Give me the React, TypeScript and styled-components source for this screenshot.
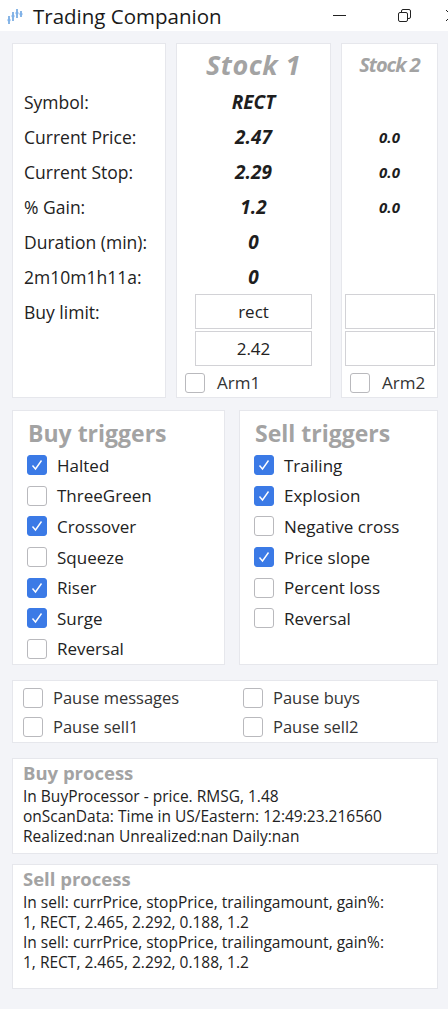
import styled, { createGlobalStyle } from 'styled-components'

const GlobalStyle = createGlobalStyle`
  body {
    margin: 0;
    background: #f3f4f8;
    font-family: "Open Sans", "Noto Sans", sans-serif;
    color: #222;
  }
`

const stockRows = [
  { label: 'Symbol:', s1: 'RECT', s2: '' },
  { label: 'Current Price:', s1: '2.47', s2: '0.0' },
  { label: 'Current Stop:', s1: '2.29', s2: '0.0' },
  { label: '% Gain:', s1: '1.2', s2: '0.0' },
  { label: 'Duration (min):', s1: '0', s2: '' },
  { label: '2m10m1h11a:', s1: '0', s2: '' },
]

const buyTriggers = [
  { name: 'Halted', on: true },
  { name: 'ThreeGreen', on: false },
  { name: 'Crossover', on: true },
  { name: 'Squeeze', on: false },
  { name: 'Riser', on: true },
  { name: 'Surge', on: true },
  { name: 'Reversal', on: false },
]

const sellTriggers = [
  { name: 'Trailing', on: true },
  { name: 'Explosion', on: true },
  { name: 'Negative cross', on: false },
  { name: 'Price slope', on: true },
  { name: 'Percent loss', on: false },
  { name: 'Reversal', on: false },
]

function Check({ on }: { on: boolean }) {
  return (
    <Box $on={on}>
      {on && (
        <svg width="14" height="14" viewBox="0 0 14 14">
          <path d="M2.5 7.5 L5.5 11 L11.5 2.5" fill="none" stroke="#fff" strokeWidth="1.4" />
        </svg>
      )}
    </Box>
  )
}

export default function App() {
  return (
    <Window>
      <GlobalStyle />
      <TitleBar>
        <AppIcon width="18" height="18" viewBox="0 0 18 18">
          <g stroke="#4a8fd8" strokeWidth="1.3" fill="none">
            <line x1="3" y1="9" x2="3" y2="17" />
            <line x1="7" y1="5" x2="7" y2="14" />
            <line x1="11" y1="2" x2="11" y2="11" />
            <line x1="15" y1="4" x2="15" y2="10" />
          </g>
          <g fill="#7fb2ea">
            <circle cx="3" cy="13" r="1.6" />
            <circle cx="7" cy="9" r="1.6" />
            <circle cx="11" cy="6" r="1.6" />
            <circle cx="15" cy="7" r="1.6" />
          </g>
        </AppIcon>
        <Title>Trading Companion</Title>
        <WinButton $gap={0}>
          <svg width="15" height="15" viewBox="0 0 15 15">
            <line x1="1" y1="7.5" x2="14" y2="7.5" stroke="#222" strokeWidth="1" />
          </svg>
        </WinButton>
        <WinButton $gap={50}>
          <svg width="15" height="15" viewBox="0 0 15 15">
            <rect x="1.5" y="4.5" width="9" height="9" rx="1.5" fill="none" stroke="#222" />
            <path d="M4.5 4.5 V3 a1.5 1.5 0 0 1 1.5 -1.5 H12 a1.5 1.5 0 0 1 1.5 1.5 V9 a1.5 1.5 0 0 1 -1.5 1.5 H10.5" fill="none" stroke="#222" />
          </svg>
        </WinButton>
        <WinButton $gap={32}>
          <svg width="15" height="15" viewBox="0 0 15 15">
            <line x1="2" y1="2" x2="13" y2="13" stroke="#222" />
            <line x1="13" y1="2" x2="2" y2="13" stroke="#222" />
          </svg>
        </WinButton>
      </TitleBar>

      <Content>
        <TopRow>
          <Card>
            <HeaderSpace />
            {stockRows.map((r) => (
              <LabelRow key={r.label}>{r.label}</LabelRow>
            ))}
            <LabelRow>Buy limit:</LabelRow>
          </Card>

          <Card>
            <StockHeader $size={27}>Stock 1</StockHeader>
            {stockRows.map((r) => (
              <ValueRow key={r.label}>{r.s1}</ValueRow>
            ))}
            <InputBox $w={115}>rect</InputBox>
            <InputBox $w={115}>2.42</InputBox>
            <ArmRow>
              <Check on={false} />
              Arm1
            </ArmRow>
          </Card>

          <Card>
            <StockHeader $size={20}>Stock 2</StockHeader>
            {stockRows.map((r) => (
              <ValueRow key={r.label} $small>{r.s2}</ValueRow>
            ))}
            <InputBox $w={88}></InputBox>
            <InputBox $w={88}></InputBox>
            <ArmRow>
              <Check on={false} />
              Arm2
            </ArmRow>
          </Card>
        </TopRow>

        <TriggerRow>
          <TriggerCard>
            <SectionTitle>Buy triggers</SectionTitle>
            {buyTriggers.map((t) => (
              <CheckRow key={t.name}>
                <Check on={t.on} />
                {t.name}
              </CheckRow>
            ))}
          </TriggerCard>
          <TriggerCard>
            <SectionTitle>Sell triggers</SectionTitle>
            {sellTriggers.map((t) => (
              <CheckRow key={t.name}>
                <Check on={t.on} />
                {t.name}
              </CheckRow>
            ))}
          </TriggerCard>
        </TriggerRow>

        <PauseCard>
          <PauseItem><Check on={false} />Pause messages</PauseItem>
          <PauseItem><Check on={false} />Pause buys</PauseItem>
          <PauseItem><Check on={false} />Pause sell1</PauseItem>
          <PauseItem><Check on={false} />Pause sell2</PauseItem>
        </PauseCard>

        <LogCard>
          <LogTitle>Buy process</LogTitle>
          <LogLine>In BuyProcessor - price. RMSG, 1.48</LogLine>
          <LogLine>onScanData: Time in US/Eastern: 12:49:23.216560</LogLine>
          <LogLine>Realized:nan Unrealized:nan Daily:nan</LogLine>
        </LogCard>

        <LogCard $tall>
          <LogTitle>Sell process</LogTitle>
          <LogLine>In sell: currPrice, stopPrice, trailingamount, gain%:</LogLine>
          <LogLine>1, RECT, 2.465, 2.292, 0.188, 1.2</LogLine>
          <LogLine>In sell: currPrice, stopPrice, trailingamount, gain%:</LogLine>
          <LogLine>1, RECT, 2.465, 2.292, 0.188, 1.2</LogLine>
        </LogCard>
      </Content>
    </Window>
  )
}

const Window = styled.div`
  width: 448px;
  height: 1009px;
  display: flex;
  flex-direction: column;
  overflow: hidden;
`

const TitleBar = styled.div`
  height: 31px;
  background: #fff;
  display: flex;
  align-items: center;
  padding-left: 6px;
  flex-shrink: 0;
  overflow: hidden;
`

const AppIcon = styled.svg`
  margin-right: 9px;
  flex-shrink: 0;
`

const Title = styled.div`
  font-size: 20.5px;
  color: #1a1a1a;
  flex: 1;
  white-space: nowrap;
`

const WinButton = styled.div<{ $gap: number }>`
  display: flex;
  align-items: center;
  flex-shrink: 0;
  margin-left: ${({ $gap }) => $gap}px;
  &:last-child {
    margin-right: -11px;
  }
`

const Content = styled.div`
  padding: 12px 10px 0 12px;
  display: flex;
  flex-direction: column;
`

const TopRow = styled.div`
  display: grid;
  grid-template-columns: 154px 155px 1fr;
  gap: 10px;
  height: 355px;
`

const Card = styled.div`
  background: #fff;
  border: 1px solid #e6e7ec;
  display: flex;
  flex-direction: column;
  align-items: stretch;
`

const HeaderSpace = styled.div`
  height: 40px;
`

const LabelRow = styled.div`
  height: 35px;
  display: flex;
  align-items: center;
  padding-left: 11px;
  font-size: 17.5px;
  color: #222;
  white-space: nowrap;
`

const StockHeader = styled.div<{ $size: number }>`
  height: 40px;
  display: flex;
  align-items: center;
  justify-content: center;
  font-size: ${({ $size }) => $size}px;
  font-weight: 700;
  font-style: italic;
  color: #a3a3a3;
  letter-spacing: ${({ $size }) => ($size < 22 ? '-1px' : '0.5px')};
`

const ValueRow = styled.div<{ $small?: boolean }>`
  height: 35px;
  display: flex;
  align-items: center;
  justify-content: center;
  font-size: ${({ $small }) => ($small ? '15px' : '19px')};
  font-weight: 700;
  font-style: italic;
  color: #1e1e1e;
`

const InputBox = styled.div<{ $w: number }>`
  height: 33px;
  width: ${({ $w }) => $w}px;
  align-self: center;
  margin-bottom: 2px;
  border: 1px solid #d2d2d6;
  display: flex;
  align-items: center;
  justify-content: center;
  font-size: 17px;
  color: #222;
`

const ArmRow = styled.div`
  display: flex;
  align-items: center;
  gap: 12px;
  padding: 3px 0 0 8px;
  font-size: 17px;
  color: #333;
`

const Box = styled.span<{ $on: boolean }>`
  width: 20px;
  height: 20px;
  box-sizing: border-box;
  border-radius: 3px;
  border: 1px solid ${({ $on }) => ($on ? '#3b7ae6' : '#b9b9bd')};
  background: ${({ $on }) => ($on ? '#3b7ae6' : '#fff')};
  display: inline-flex;
  align-items: center;
  justify-content: center;
  flex-shrink: 0;
`

const TriggerRow = styled.div`
  display: grid;
  grid-template-columns: 213px 1fr;
  gap: 14px;
  margin-top: 12px;
  height: 254px;
`

const TriggerCard = styled.div`
  background: #fff;
  border: 1px solid #e6e7ec;
  padding: 5px 0 0 14px;
  display: flex;
  flex-direction: column;
`

const SectionTitle = styled.div`
  font-size: 23px;
  font-weight: 700;
  color: #a3a3a3;
  height: 34px;
  display: flex;
  align-items: center;
  padding-left: 1px;
  white-space: nowrap;
`

const CheckRow = styled.div`
  height: 30.6px;
  display: flex;
  align-items: center;
  gap: 10px;
  font-size: 17px;
  color: #222;
`

const PauseCard = styled.div`
  margin-top: 16px;
  background: #fff;
  border: 1px solid #e6e7ec;
  height: 63px;
  display: grid;
  grid-template-columns: 220px 1fr;
  align-content: start;
  padding: 2px 0 0 10px;
  box-sizing: border-box;
`

const PauseItem = styled.div`
  height: 29px;
  display: flex;
  align-items: center;
  gap: 10px;
  font-size: 16.5px;
  color: #333;
`

const LogCard = styled.div<{ $tall?: boolean }>`
  margin-top: ${({ $tall }) => ($tall ? '10px' : '15px')};
  background: #fff;
  border: 1px solid #e6e7ec;
  height: ${({ $tall }) => ($tall ? '125px' : '96px')};
  box-sizing: border-box;
  padding: 1px 10px 0 10px;
`

const LogTitle = styled.div`
  font-size: 18.5px;
  font-weight: 700;
  color: #a3a3a3;
  line-height: 26px;
`

const LogLine = styled.div`
  font-size: 15.5px;
  line-height: 20px;
  color: #222;
  white-space: nowrap;
`
